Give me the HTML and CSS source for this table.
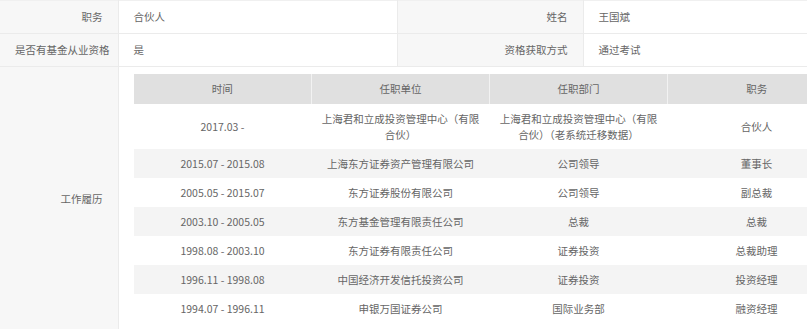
FILE: index.html
```html
<!DOCTYPE html>
<html lang="zh-CN">
<head>
<meta charset="utf-8">
<link rel="stylesheet" href="styles.css">
</head>
<body>
<table class="info">
  <colgroup>
    <col class="c-label1"><col class="c-val1"><col class="c-label2"><col class="c-val2">
  </colgroup>
  <tr>
    <td class="label">职务</td>
    <td class="val">合伙人</td>
    <td class="label">姓名</td>
    <td class="val">王国斌</td>
  </tr>
  <tr>
    <td class="label">是否有基金从业资格</td>
    <td class="val">是</td>
    <td class="label">资格获取方式</td>
    <td class="val">通过考试</td>
  </tr>
  <tr>
    <td class="label">工作履历</td>
    <td class="val nested" colspan="3">
      <table class="history">
        <thead>
          <tr><th>时间</th><th>任职单位</th><th>任职部门</th><th>职务</th></tr>
        </thead>
        <tbody>
          <tr><td>2017.03 -</td><td>上海君和立成投资管理中心（有限合伙）</td><td>上海君和立成投资管理中心（有限合伙）（老系统迁移数据）</td><td>合伙人</td></tr>
          <tr><td>2015.07 - 2015.08</td><td>上海东方证券资产管理有限公司</td><td>公司领导</td><td>董事长</td></tr>
          <tr><td>2005.05 - 2015.07</td><td>东方证券股份有限公司</td><td>公司领导</td><td>副总裁</td></tr>
          <tr><td>2003.10 - 2005.05</td><td>东方基金管理有限责任公司</td><td>总裁</td><td>总裁</td></tr>
          <tr><td>1998.08 - 2003.10</td><td>东方证券有限责任公司</td><td>证券投资</td><td>总裁助理</td></tr>
          <tr><td>1996.11 - 1998.08</td><td>中国经济开发信托投资公司</td><td>证券投资</td><td>投资经理</td></tr>
          <tr><td>1994.07 - 1996.11</td><td>申银万国证券公司</td><td>国际业务部</td><td>融资经理</td></tr>
        </tbody>
      </table>
    </td>
  </tr>
</table>
</body>
</html>
```

FILE: styles.css
```css
html, body {
  margin: 0;
  padding: 0;
  overflow: hidden;
  background: #fff;
}
body {
  font-family: "Noto Sans CJK SC", "Noto Sans", sans-serif;
  font-size: 10.5px;
  color: #666;
  width: 862px;
}
.info {
  border-collapse: collapse;
  table-layout: fixed;
  width: 862px;
}
.c-label1 { width: 118px; }
.c-val1 { width: 279px; }
.c-label2 { width: 186px; }
.c-val2 { width: 279px; }
.info > tbody > tr > td {
  border: 1px solid #ebebeb;
  height: 32px;
  padding: 0 15px;
  line-height: 16px;
}
.info > tbody > tr:first-child > td { border-top: 1px solid #f0f0f0; }
.info > tbody > tr > td:first-child { border-left: none; }
.label {
  background: #f7f7f7;
  text-align: right;
  white-space: nowrap;
}
.val { background: #fff; }
.info > tbody > tr > td.nested {
  padding: 7px 15px;
}
.history {
  border-collapse: collapse;
  table-layout: fixed;
  width: 712px;
}
.history th {
  background: #e0e0e0;
  font-weight: normal;
  height: 30px;
  padding: 0 8px;
  border-left: 1px solid #f2f2f2;
  line-height: 16px;
  color: #666;
}
.history th:first-child { border-left: none; }
.history td {
  text-align: center;
  padding: 6.5px 8px;
  line-height: 16px;
}
.history tbody tr:nth-child(even) td { background: #f4f4f4; }
```
